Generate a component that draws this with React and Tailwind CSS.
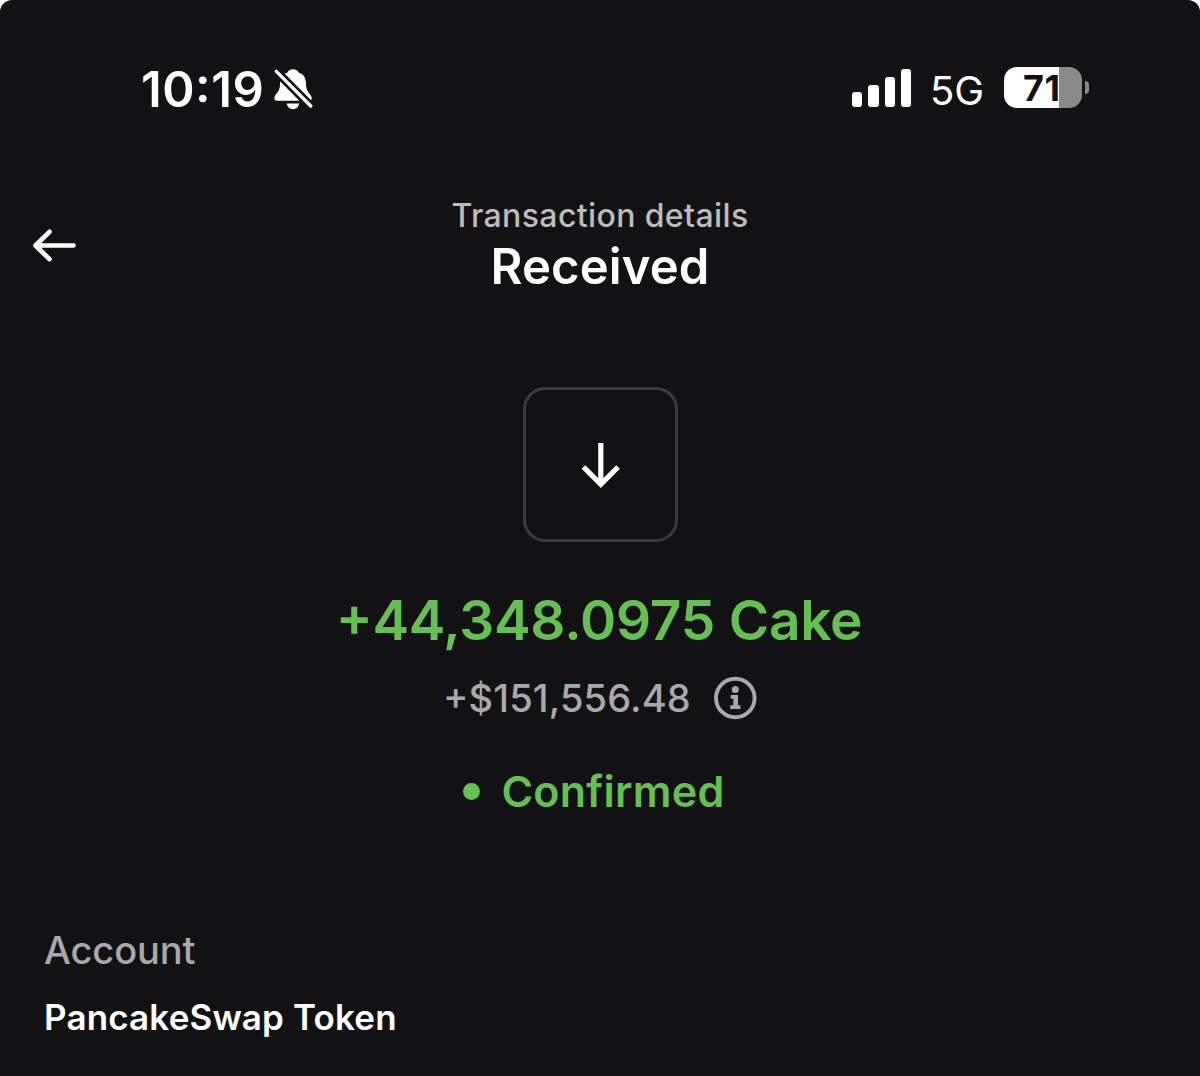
import React from "react";

function BellOff() {
  return (
    <svg viewBox="0 0 40 42" className="h-[42px] w-[40px]" fill="none">
      <path
        d="M19 1.200C16 1.200 14 2.800 13.500 4.600C8.500 6 6.300 9.800 6.100 15.500C6 21.500 4.300 23.600 2 26.300C0.900 27.800 0.400 28.800 0.400 30.300C0.400 32 1.500 32.800 3.200 32.800H34.500C36.500 32.800 37.800 31.900 37.800 30.300C37.800 28.800 37 27.700 35.900 26.300C33.700 23.600 32.100 21.500 32 15.500C31.800 9.800 29.500 6 24.500 4.600C24 2.800 22 1.200 19 1.200Z"
        fill="#fff"
      />
      <path d="M12.700 35.500H25.200C24.500 39 22.400 41.200 19 41.200C15.600 41.200 13.400 39 12.700 35.500Z" fill="#fff" />
      <path d="M2 3L37 38.400" stroke="#121214" strokeWidth="8.600" />
      <path d="M2.300 3.300L36.800 38" stroke="#fff" strokeWidth="3.300" strokeLinecap="round" />
    </svg>
  );
}

function StatusBar() {
  return (
    <header className="flex h-[178px] items-start justify-between pl-[141px] pr-[111px] text-white">
      <div className="flex pt-[60px]">
        <span className="w-[133px] text-[49px] font-semibold leading-[60px] tracking-[0.500px] [font-feature-settings:'case']">
          10:19
        </span>
        <div className="pt-[8px]">
          <BellOff />
        </div>
      </div>
      <div className="flex pt-[66px]">
        <div className="flex h-[41px] items-end gap-[6px]">
          <i className="h-[15px] w-[10px] rounded-[3px] bg-white" />
          <i className="h-[22px] w-[11px] rounded-[3px] bg-white" />
          <i className="h-[30px] w-[10px] rounded-[3px] bg-white" />
          <i className="h-[38px] w-[10px] rounded-[3px] bg-white" />
        </div>
        <span className="ml-[19px] w-[74px] text-[40px] leading-[49px]">5G</span>
        <div className="mt-px flex h-[41px] w-[78px] items-center rounded-[13px] bg-[linear-gradient(90deg,#fff_55px,#8a8a8a_55px)] pl-[19px]">
          <span className="pt-px text-[36px] font-bold leading-[42px] tracking-[0.500px] text-[#121214]">71</span>
        </div>
        <i className="ml-[3px] mt-[15px] h-[13px] w-[4px] rounded-r-[5px] bg-[#8a8a8a]" />
      </div>
    </header>
  );
}

function BackArrow() {
  return (
    <svg viewBox="0 0 44 34" className="h-[34px] w-[44px]" fill="none" stroke="#fff" strokeWidth="4.600" strokeLinecap="round" strokeLinejoin="round">
      <path d="M17.500 3.800L3.500 17.500L17.500 31.200M3.500 17.500H41.500" />
    </svg>
  );
}

function InfoIcon() {
  return (
    <svg viewBox="0 0 44 44" className="size-[44px]" fill="none">
      <circle cx="22.300" cy="22" r="19.300" stroke="#a9a9ab" strokeWidth="3.900" />
      <circle cx="22.300" cy="13.600" r="3.500" fill="#a9a9ab" />
      <path d="M17.800 19H25V29.200H27.400V33H17.200V29.200H20.300V22.800H17.800Z" fill="#a9a9ab" />
    </svg>
  );
}

export default function App() {
  return (
    <div className="h-[1076px] w-full overflow-hidden bg-white">
      <main className="flex h-full flex-col rounded-t-[12px] bg-[#121214] font-[Inter,sans-serif]">
        <StatusBar />

        <div className="grid h-[118px] grid-cols-[150px_1fr_150px] pt-[17px]">
          <button className="flex items-start pl-[32px] pt-[33px]" aria-label="Back">
            <BackArrow />
          </button>
          <div className="flex flex-col items-center whitespace-nowrap">
            <p className="text-[32px] font-medium leading-[41px] tracking-[0.380px] text-[#bcbcbd]">Transaction details</p>
            <h1 className="mt-px text-[49px] font-semibold leading-[60px] tracking-[0.100px] text-white">Received</h1>
          </div>
        </div>

        <section className="flex flex-col items-center pt-[91px]">
          <div className="ml-px flex h-[155px] w-[155px] items-center justify-center rounded-[22px] border-[3px] border-[#3b3b3d]">
            <svg viewBox="0 0 40 46" className="h-[46px] w-[40px]" fill="none" stroke="#fff" strokeWidth="5.200">
              <path d="M19.800 1V41.500M2.500 25L19.800 42.300L37.100 25" />
            </svg>
          </div>
          <p className="mr-[2px] mt-[48px] whitespace-nowrap text-[55px] font-semibold leading-[60px] tracking-[-0.250px] text-[#66be54] [font-feature-settings:'case']">
            +44,348.0975 Cake
          </p>
          <div className="mt-[26px] flex h-[44px] items-center gap-[22px]">
            <span className="text-[38px] font-medium leading-[44px] tracking-[0.150px] text-[#a9a9ab] [font-feature-settings:'case']">
              +$151,556.48
            </span>
            <InfoIcon />
          </div>
          <div className="mr-[12px] mt-[46px] flex h-[50px] items-center gap-[21px] text-[#66be54]">
            <i className="size-[17px] rounded-full bg-[#66be54]" />
            <span className="text-[43px] font-semibold leading-[50px] tracking-[0.250px]">Confirmed</span>
          </div>
        </section>

        <section className="px-[44px] pt-[111px]">
          <p className="text-[38px] font-medium leading-[46px] tracking-[-0.120px] text-[#a9a9ab]">Account</p>
          <p className="mt-[22px] text-[35px] font-semibold leading-[44px] tracking-[0.150px] text-white">PancakeSwap Token</p>
        </section>
      </main>
    </div>
  );
}
